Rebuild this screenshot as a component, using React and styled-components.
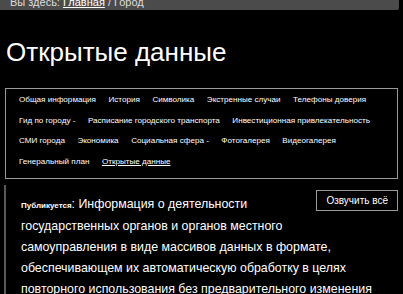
import styled, { createGlobalStyle } from "styled-components";

const Global = createGlobalStyle`
  html, body {
    margin: 0;
    padding: 0;
    background: #000;
    color: #fff;
    font-family: "Liberation Sans", Arial, sans-serif;
  }
`;

const Crumbs = styled.div`
  height: 10px;
  margin-right: 4px;
  background: #4b4b4b;
  border-bottom-right-radius: 2px;
  overflow: hidden;
  position: relative;
  font-size: 11px;
  color: #ddd;
`;

const CrumbText = styled.div`
  position: absolute;
  left: 10px;
  bottom: 2px;
  line-height: 12px;
  white-space: nowrap;

  a {
    color: #fff;
    text-decoration: underline;
  }
`;

const Title = styled.h1`
  margin: 22px 0 0 6px;
  font-size: 26px;
  font-weight: normal;
  line-height: 40px;
`;

const Menu = styled.ul`
  list-style: none;
  margin: 16px 5px 0 5px;
  padding: 1px 8px 6px 8px;
  border: 1px solid #9a9a9a;
  display: flex;
  flex-wrap: wrap;
`;

const Item = styled.li`
  padding: 0 5px;
  margin-right: 2.5px;
  font-size: 8.1px;
  line-height: 20.5px;
`;

const MenuLink = styled.a`
  color: #fff;
  text-decoration: ${(p) => (p.active ? "underline" : "none")};
`;

const Content = styled.div`
  margin: 6px 5px 0 4px;
  padding: 5px 0 0 15px;
  border-left: 2px solid #5a5a5a;
`;

const Speak = styled.button`
  float: right;
  margin: 0 0 6px 8px;
  background: #000;
  color: #fff;
  border: 1px solid #9a9a9a;
  font-family: "Liberation Sans", Arial, sans-serif;
  font-size: 10px;
  padding: 0 9px;
  height: 21px;
`;

const Text = styled.p`
  margin: 0;
  padding-top: 4px;
  font-size: 12.4px;
  line-height: 21px;
`;

const Label = styled.b`
  font-size: 8px;
`;

const items = [
  ["Общая информация"],
  ["История"],
  ["Символика"],
  ["Экстренные случаи"],
  ["Телефоны доверия"],
  ["Гид по городу", true],
  ["Расписание городского транспорта"],
  ["Инвестиционная привлекательность"],
  ["СМИ города"],
  ["Экономика"],
  ["Социальная сфера", true],
  ["Фотогалерея"],
  ["Видеогалерея"],
  ["Генеральный план"],
];

export default function App() {
  return (
    <>
      <Global />
      <Crumbs>
        <CrumbText>
          Вы здесь: <a href="#">Главная</a> / Город
        </CrumbText>
      </Crumbs>
      <Title>Открытые данные</Title>
      <Menu>
        {items.map(([name, sub]) => (
          <Item key={name}>
            <MenuLink href="#">{name}</MenuLink>
            {sub ? " -" : ""}
          </Item>
        ))}
        <Item>
          <MenuLink href="#" active>
            Открытые данные
          </MenuLink>
        </Item>
      </Menu>
      <Content>
        <Speak>Озвучить всё</Speak>
        <Text>
          <Label>Публикуется</Label>: Информация о деятельности государственных
          органов и органов местного самоуправления в виде массивов данных в
          формате, обеспечивающем их автоматическую обработку в целях повторного
          использования без предварительного изменения человеком
          (машиночитаемый формат)
        </Text>
      </Content>
    </>
  );
}
